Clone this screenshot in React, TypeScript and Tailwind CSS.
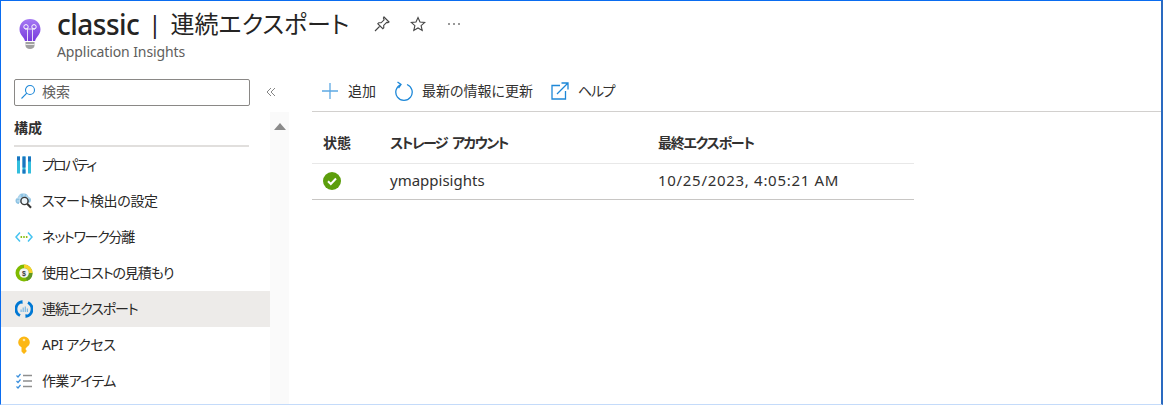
import React from "react";

const font = { fontFamily: '"Noto Sans", "Noto Sans CJK JP", sans-serif' };

function Bulb() {
  return (
    <svg width="24" height="32" viewBox="0 0 24 32">
      <defs>
        <linearGradient id="bulb" x1="0" y1="0" x2="0" y2="1">
          <stop offset="0" stopColor="#a67af4" />
          <stop offset="1" stopColor="#773adc" />
        </linearGradient>
      </defs>
      <path d="M12 1C5.600 1 1.500 5.800 1.500 11.300c0 3.200 1.400 5.200 3 7.200 1.300 1.600 2.200 3 2.400 4.500h10.200c.2-1.500 1.100-2.900 2.400-4.500 1.600-2 3-4 3-7.200C22.500 5.800 18.400 1 12 1z" fill="url(#bulb)" />
      <path d="M9.500 23V11M14.500 23V11M7 11h10" stroke="#e6dcf8" strokeWidth="1" fill="none" />
      <circle cx="8" cy="8.800" r="2.200" stroke="#fff" strokeWidth="1" fill="none" />
      <circle cx="16" cy="8.800" r="2.200" stroke="#fff" strokeWidth="1" fill="none" />
      <path d="M7.500 24h9v3.500c0 2-1.800 3.500-4.500 3.500s-4.500-1.500-4.500-3.500z" fill="#a0a0a0" />
      <path d="M7.500 26.500h9" stroke="#e8e8e8" strokeWidth="1" />
    </svg>
  );
}

function Props() {
  return (
    <svg width="16" height="18" viewBox="0 0 16 18">
      <rect x="1" y="0.500" width="3" height="17" fill="#32bedd" />
      <rect x="1" y="0.500" width="3" height="4" fill="#1b74c0" />
      <rect x="6.500" y="0.500" width="3" height="17" fill="#32bedd" />
      <rect x="6.500" y="0.500" width="3" height="11" fill="#1b74c0" />
      <rect x="6.500" y="13.500" width="3" height="4" fill="#1b74c0" />
      <rect x="12" y="0.500" width="3" height="17" fill="#32bedd" />
      <rect x="12" y="0.500" width="3" height="5" fill="#1b74c0" />
    </svg>
  );
}

function Smart() {
  return (
    <svg width="18" height="18" viewBox="0 0 18 18">
      <path d="M4 12C1.500 12 0.500 10.500 0.500 8.500 0.500 7 1.500 6 3 5.500 3.500 3 5.500 1 8 1.500c2.500-.5 5 .8 5.500 3.500 1.500.3 2.500 1.500 2.500 3 0 1-.4 1.800-1 2.500H4z" fill="#8fc4e4" />
      <path d="M2 6h13M2 9h3M5 2.500v8M9 2v3M12 3v3" stroke="#d8ecf7" strokeWidth="0.800" />
      <circle cx="9.500" cy="9" r="3.600" fill="#eef6fb" stroke="#3a3a3a" strokeWidth="1.400" />
      <path d="M12.200 11.700l3.800 4" stroke="#333" strokeWidth="2" />
    </svg>
  );
}

function Net() {
  return (
    <svg width="18" height="12" viewBox="0 0 18 12">
      <path d="M5 1.500L1 6l4 4.500" stroke="#45c3f0" strokeWidth="1.500" fill="none" />
      <path d="M13 1.500L17 6l-4 4.500" stroke="#45c3f0" strokeWidth="1.500" fill="none" />
      <circle cx="6.300" cy="6" r="0.900" fill="#7fba00" />
      <circle cx="9" cy="6" r="0.900" fill="#7fba00" />
      <circle cx="11.700" cy="6" r="0.900" fill="#7fba00" />
    </svg>
  );
}

function Cost() {
  return (
    <svg width="18" height="18" viewBox="0 0 18 18">
      <circle cx="9" cy="9" r="8.500" fill="#7fba00" />
      <path d="M9 .5A8.500 8.500 0 0 1 17.500 9H14A5 5 0 0 0 9 4z" fill="#f8d22a" />
      <path d="M17.500 9A8.500 8.500 0 0 1 12 17l-1.200-3.300A5 5 0 0 0 14 9z" fill="#5e9624" />
      <circle cx="9" cy="9" r="4.800" fill="#f4f4f4" />
      <text x="9" y="11.500" fontSize="7" fontWeight="700" textAnchor="middle" fill="#3b3b3b" fontFamily="Liberation Sans">$</text>
    </svg>
  );
}

function Export() {
  return (
    <svg width="18" height="18" viewBox="0 0 18 18">
      <path d="M7 1.600A7.500 7.500 0 0 0 5 15.600" stroke="#0078d4" strokeWidth="2.800" fill="none" />
      <path d="M11 16.400A7.500 7.500 0 0 0 13 2.400" stroke="#0078d4" strokeWidth="2.800" fill="none" />
      <path d="M7.500 0v4l-3-1.500zM10.500 18v-4l3 1.500z" fill="#0078d4" />
      <path d="M5.500 9.500h1.200V12H5.500zM7.600 7.500h1.200V12H7.600zM9.700 6.500h1.200V12H9.700zM11.800 8.500H13V12h-1.200z" fill="#7cb8e4" />
    </svg>
  );
}

function Key() {
  return (
    <svg width="14" height="18" viewBox="0 0 14 18">
      <path d="M7 .5A5.800 5.800 0 0 0 1.200 6.300c0 2.200 1.200 4 3.300 5v4.200L7 18l2.500-2.500v-1.300L8.300 13l1.200-1.200v-.5c2.100-1 3.300-2.800 3.300-5A5.800 5.800 0 0 0 7 .5z" fill="#fcb714" />
      <circle cx="7" cy="4" r="1.300" fill="#fde7a8" />
    </svg>
  );
}

function WorkItems() {
  return (
    <svg width="16" height="16" viewBox="0 0 16 16">
      <path d="M.5 2.500L2 4l2.500-3M.5 8L2 9.500 4.500 6.500M.5 13.500L2 15l2.500-3" stroke="#3a8fdc" strokeWidth="1.200" fill="none" />
      <path d="M7 2.500h9M7 8h9M7 13.500h9" stroke="#8f8f8f" strokeWidth="1.400" />
    </svg>
  );
}

const items: { label: string; icon: React.ReactNode; active?: boolean; track: string }[] = [
  { label: "プロパティ", icon: <Props />, track: "tracking-[-1.8px]" },
  { label: "スマート検出の設定", icon: <Smart />, track: "tracking-[-0.33px]" },
  { label: "ネットワーク分離", icon: <Net />, track: "tracking-[-1.25px]" },
  { label: "使用とコストの見積もり", icon: <Cost />, track: "tracking-[-1.1px]" },
  { label: "連続エクスポート", icon: <Export />, active: true, track: "tracking-[-1.1px]" },
  { label: "API アクセス", icon: <Key />, track: "tracking-[-0.4px]" },
  { label: "作業アイテム", icon: <WorkItems />, track: "tracking-[-0.67px]" },
];

function NavRow({ label, icon, active, track }: { label: string; icon: React.ReactNode; active?: boolean; track: string }) {
  return (
    <div className={`flex h-9 items-center text-sm text-[#292827] ${active ? "bg-[#edebe9]" : ""}`}>
      <div className="flex w-[41px] shrink-0 justify-center pl-[5px]">{icon}</div>
      <span className={track}>{label}</span>
    </div>
  );
}

export default function App() {
  return (
    <div
      className="flex h-[405px] w-[1163px] flex-col overflow-hidden border-t border-r-2 border-l border-b border-t-[#0a6cf0] border-r-[#2a6ac0] border-l-[#0a6cf0] border-b-[#c4dbfa] bg-white [font-feature-settings:'palt']"
      style={font}
    >
      <header className="flex h-[68px] shrink-0 pl-[17px] pt-[5px]">
        <div className="mt-[12px] w-[39px] shrink-0">
          <Bulb />
        </div>
        <div className="flex flex-col">
          <div className="flex h-[36px] items-center">
            <span className="text-[28px] font-medium leading-9 tracking-[-0.5px] text-[#252423]">classic</span>
            <span className="ml-[9px] text-[24px] leading-9 text-[#252423]">|</span>
            <span className="ml-[9px] text-[24px] leading-9 text-[#252423]">連続エクスポート</span>
            <svg className="ml-[25px]" width="16" height="16" viewBox="0 0 16 16" fill="none" stroke="#444" strokeWidth="1.100">
              <path d="M10 1l5 5-1 .6-1.300-.2-3 3 .1 2.300-1 1-5-5 1-1 2.300.1 3-3L9.400 2zM5.500 10.500L1 15" />
            </svg>
            <svg className="ml-[20px]" width="16" height="16" viewBox="0 0 16 16" fill="none" stroke="#444" strokeWidth="1.100">
              <path d="M8 1.500l2 4.500 4.800.4-3.700 3.200 1.100 4.800L8 12l-4.200 2.400 1.100-4.800L1.200 6.400 6 6z" />
            </svg>
            <span className="ml-[22px] flex gap-[3px]">
              <i className="h-[2px] w-[2px] rounded-full bg-[#777]" />
              <i className="h-[2px] w-[2px] rounded-full bg-[#777]" />
              <i className="h-[2px] w-[2px] rounded-full bg-[#777]" />
            </span>
          </div>
          <div className="mt-[1px] text-[14px] leading-[18px] tracking-[-0.1px] text-[#605e5c]">Application Insights</div>
        </div>
      </header>

      <div className="flex min-h-0 flex-1">
        <aside className="flex w-[269px] shrink-0 flex-col">
          <div className="mt-[9px] flex h-[28px] shrink-0 items-center pl-[13px]">
            <div className="flex h-[27px] w-[236px] shrink-0 items-center rounded-[2px] border border-[#8a8886] pl-[5px]">
              <svg width="16" height="16" viewBox="0 0 16 16" fill="none" stroke="#1e88d8" strokeWidth="1.100">
                <circle cx="10" cy="6" r="4.500" />
                <path d="M6.800 9.200L1.500 14.500" />
              </svg>
              <span className="ml-[6px] text-sm text-[#605e5c]">検索</span>
            </div>
            <svg className="ml-[16px] shrink-0" width="10" height="10" viewBox="0 0 10 10" fill="none" stroke="#777" strokeWidth="0.900">
              <path d="M5 1L1 5l4 4M9 1L5 5l4 4" />
            </svg>
          </div>
          <div className="ml-[13px] mr-[21px] mt-[6px] flex h-[35px] shrink-0 items-center border-b-2 border-[#e1dfdd] pb-[2px] text-sm font-bold text-[#323130]">
            構成
          </div>
          <nav>
            {items.map((it) => (
              <NavRow key={it.label} {...it} />
            ))}
          </nav>
        </aside>

        <div className="mt-[43px] flex w-[19px] shrink-0 justify-center bg-[#fafafa] pt-[11px]">
          <div className="h-0 w-0 border-x-[6px] border-b-[7px] border-x-transparent border-b-[#8a8a8a]" />
        </div>

        <main className="flex-1 pl-[23px]">
          <div className="flex h-[43px] items-center border-b border-[#d2d0ce] pl-[9px] pt-[2px] text-sm text-[#323130]">
            <svg width="18" height="18" viewBox="0 0 18 18" stroke="#5ea9e4" strokeWidth="1.300">
              <path d="M9 1v16M1 9h16" />
            </svg>
            <span className="ml-[9px]">追加</span>
            <svg className="ml-[19px]" width="18" height="20" viewBox="0 0 18 20" fill="none" stroke="#1e88d8" strokeWidth="1.300">
              <path d="M12 3.500a8.200 8.200 0 1 1-6 0" />
              <path d="M2.500 1l3.500 2.500L3.500 7" />
            </svg>
            <span className="ml-[9px]">最新の情報に更新</span>
            <svg className="ml-[18px]" width="18" height="18" viewBox="0 0 18 18" fill="none" stroke="#1e88d8" strokeWidth="1.300">
              <path d="M9 3.500H1v13.500h13.500V9" />
              <path d="M6 12L17 1M10.500 1H17v6.500" />
            </svg>
            <span className="ml-[9px] tracking-[-1.3px]">ヘルプ</span>
          </div>
          <table className="mt-[11px] w-[602px] table-fixed border-collapse text-sm text-[#323130]">
            <colgroup>
              <col className="w-[78px]" />
              <col className="w-[268px]" />
              <col />
            </colgroup>
            <thead>
              <tr className="h-[40px] border-b border-[#e8e8e8] text-left text-sm">
                <th className="pl-[11px] font-bold">状態</th>
                <th className="font-bold tracking-[-1.6px] [word-spacing:3px]">ストレージ アカウント</th>
                <th className="font-bold tracking-[-1.25px]">最終エクスポート</th>
              </tr>
            </thead>
            <tbody>
              <tr className="h-[36px] border-b border-[#c8c6c4]">
                <td className="pl-[11px]">
                  <svg width="18" height="18" viewBox="0 0 18 18">
                    <circle cx="9" cy="9" r="9" fill="#5c9e0c" />
                    <path d="M5 9.300l2.800 2.700L13 6.500" stroke="#fff" strokeWidth="2" fill="none" />
                  </svg>
                </td>
                <td className="text-[15px]">ymappisights</td>
                <td className="text-[15px] tracking-[0.7px]">10/25/2023, 4:05:21 AM</td>
              </tr>
            </tbody>
          </table>
        </main>
      </div>
    </div>
  );
}
